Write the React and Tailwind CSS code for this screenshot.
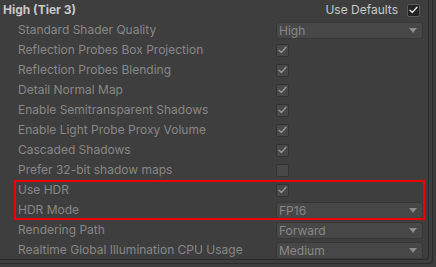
import React from "react";

const Check = ({ color = "#9a9a9a" }) => (
  <svg width="9" height="8" viewBox="0 0 9 8" className="block">
    <path d="M1 4.2 L3.4 6.4 L8 1.3" fill="none" stroke={color} strokeWidth="1.4" strokeLinecap="round" strokeLinejoin="round" />
  </svg>
);

const CheckBox = ({ checked }) => (
  <div className="w-[13px] h-[13px] rounded-[2px] bg-[#484848] border border-[#333333] flex items-center justify-center">
    {checked && <Check />}
  </div>
);

const Dropdown = ({ value }) => (
  <div className="w-[147px] h-[17px] rounded-[3px] bg-[#474747] border border-[#373737] flex items-center justify-between pl-[2px] pr-[5px] text-[#888888]">
    <span className="leading-[15px]">{value}</span>
    <svg width="8" height="5" viewBox="0 0 8 5" className="block">
      <path d="M0 0 H8 L4 5 Z" fill="#8a8a8a" />
    </svg>
  </div>
);

const rows = [
  ["Standard Shader Quality", "dd", "High"],
  ["Reflection Probes Box Projection", "cb", true],
  ["Reflection Probes Blending", "cb", true],
  ["Detail Normal Map", "cb", true],
  ["Enable Semitransparent Shadows", "cb", true],
  ["Enable Light Probe Proxy Volume", "cb", true],
  ["Cascaded Shadows", "cb", true],
  ["Prefer 32-bit shadow maps", "cb", false],
  ["Use HDR", "cb", true],
  ["HDR Mode", "dd", "FP16"],
  ["Rendering Path", "dd", "Forward"],
  ["Realtime Global Illumination CPU Usage", "dd", "Medium"],
];

export default function App() {
  return (
    <div
      className="relative w-[436px] h-[267px] overflow-hidden bg-[#3c3c3c] text-[12px] leading-[20px]"
      style={{ fontFamily: "Inter, 'Noto Sans', sans-serif" }}
    >
      <div className="ml-[-10px] mt-[-10px] w-[443px] h-[274px] border-r border-b border-[#2a2a2a] rounded-br-[4px] pr-[3px] pb-[3px] bg-[#3e3e3e]">
        <div className="w-full h-full border-r border-b border-[#2a2a2a] rounded-br-[4px] bg-[#3e3e3e] pl-[10px] pt-[10px]">
          <div className="flex items-center h-[20px] pl-[3px] pr-[8px]">
            <span className="font-bold text-[#c8c8c8]">High (Tier 3)</span>
            <span className="ml-auto text-[#c8c8c8]">Use Defaults</span>
            <div className="ml-[9px] w-[13px] h-[13px] rounded-[2px] bg-[#232323] border border-[#5a5a5a] flex items-center justify-center">
              <Check color="#e6e6e6" />
            </div>
          </div>
          {rows.map(([label, kind, val]) => (
            <div key={label} className="flex items-center h-[20px]">
              <span className="w-[276px] shrink-0 pl-[18px] text-[#878787] whitespace-nowrap">{label}</span>
              {kind === "cb" ? <CheckBox checked={val} /> : <Dropdown value={val} />}
            </div>
          ))}
        </div>
      </div>
      <div className="absolute left-[14px] top-[180px] w-[411px] h-[40px] border-2 border-[#f00000]" />
    </div>
  );
}
